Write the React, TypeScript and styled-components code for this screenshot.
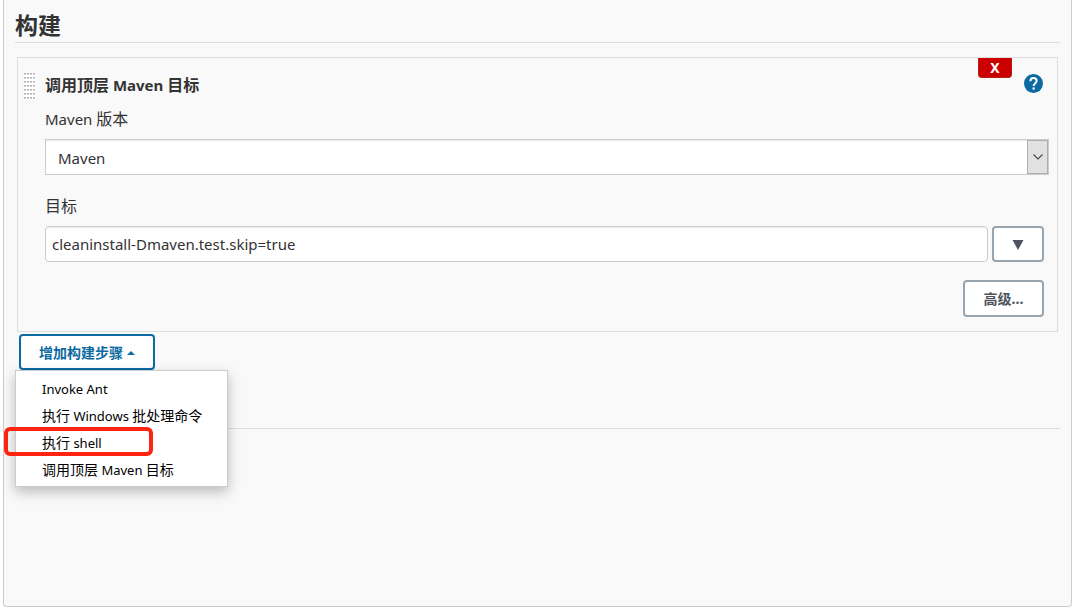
import React from "react";
import styled, { createGlobalStyle } from "styled-components";

const Global = createGlobalStyle`
  *, *::before, *::after { box-sizing: border-box; }
  body {
    margin: 0;
    background: #fff;
    color: #333;
    font: 16px/24px "Noto Sans", "Noto Sans CJK SC", sans-serif;
  }
  button, input, select { font: inherit; color: inherit; margin: 0; }
`;

const Panel = styled.main`
  min-height: 100vh;
  margin: 0 1px 0 3px;
  padding: 0 11px;
  background: #f9f9f9;
  border: 1px solid #ccc;
  border-top: 0;
  border-radius: 0 0 4px 4px;
`;

const SectionTitle = styled.h1`
  margin: 0;
  padding: 10px 0 2px;
  font-size: 23px;
  line-height: 30px;
  font-weight: 700;
  border-bottom: 1px solid #ddd;
`;

const StepCard = styled.section`
  margin: 14px 2px 0;
  padding: 0 8px 14px 6px;
  border: 1px solid #ddd;
`;

const StepHeader = styled.header`
  display: flex;
  align-items: flex-start;
`;

const Grip = styled.span`
  width: 12px;
  height: 26px;
  margin: 15px 9px 0 0;
  background-image:
    linear-gradient(90deg, transparent 2px, #fff 2px),
    linear-gradient(#b0b0b0 1px, #d4d4d4 1px, #d4d4d4 2px, #fff 2px);
  background-size: 3px 4px;
`;

const StepTitle = styled.h2`
  flex: 1;
  margin: 15px 0 0;
  font-size: 16px;
  line-height: 24px;
  font-weight: 700;
`;

const Latin = styled.span<{ $size: number }>`
  font-size: ${(p) => p.$size}px;
`;

const DeleteButton = styled.button`
  width: 34px;
  height: 20px;
  padding: 0;
  border: 1px solid #b3200f;
  border-top: 0;
  border-radius: 0 0 4px 4px;
  background: #c00;
  color: #fff;
  font-size: 14px;
  line-height: 20px;
  font-weight: 700;
`;

const HelpLink = styled.a`
  display: block;
  width: 19px;
  height: 19px;
  margin: 16px 6px 0 12px;
  svg { display: block; }
`;

const StepBody = styled.div`
  padding-left: 21px;
`;

const Field = styled.div<{ $gap: number }>`
  margin-top: ${(p) => p.$gap}px;
`;

const Label = styled.label`
  display: block;
  width: fit-content;
  height: 24px;
  margin-bottom: 8px;
`;

const SelectBox = styled.div`
  display: grid;
  > * { grid-area: 1 / 1; }
`;

const Select = styled.select`
  appearance: none;
  width: 100%;
  height: 36px;
  padding: 2px 30px 0 12px;
  border: 1px solid #ccc;
  border-radius: 0;
  background: #fff;
  box-shadow: inset 0 1px 1px rgba(0, 0, 0, 0.08);
  font-size: 15px;
`;

const SelectArrow = styled.span`
  justify-self: end;
  display: grid;
  place-items: center;
  width: 21px;
  height: 34px;
  margin: 1px;
  border: 1px solid #adadad;
  background: #e1e1e1;
  pointer-events: none;
`;

const InputRow = styled.div`
  display: flex;
  gap: 4px;
  margin-right: 5px;
`;

const TextInput = styled.input`
  flex: 1;
  min-width: 0;
  height: 36px;
  padding: 0 6px;
  border: 1px solid #ccc;
  border-radius: 4px;
  background: #fff;
  box-shadow: inset 0 1px 1px rgba(0, 0, 0, 0.08);
  font-size: 15px;
`;

const Button = styled.button<{ $primary?: boolean; $width: number; $height?: number }>`
  display: flex;
  align-items: center;
  justify-content: center;
  gap: 4px;
  width: ${(p) => p.$width}px;
  height: ${(p) => p.$height ?? 36}px;
  padding: 1px 0 0;
  border: 2px solid ${(p) => (p.$primary ? "#0b6aa2" : "#98a4ae")};
  border-radius: 4px;
  background: #fff;
  color: ${(p) => (p.$primary ? "#0b6aa2" : "#4d545d")};
  font-size: 14px;
  font-weight: 700;
`;

const Actions = styled.div`
  display: flex;
  justify-content: flex-end;
  margin: 18px 5px 0 0;
`;

const AddStep = styled.div`
  position: relative;
  width: fit-content;
  margin: 2px 0 0 4px;
`;

const Menu = styled.ul`
  position: absolute;
  top: 100%;
  left: -4px;
  width: 213px;
  margin: 0;
  padding: 4px 0 3px;
  list-style: none;
  background: #fff;
  border: 1px solid #ccc;
  box-shadow: 0 5px 12px rgba(0, 0, 0, 0.25);
`;

const MenuItem = styled.li`
  position: relative;
`;

const MenuLink = styled.a`
  display: block;
  height: 27px;
  padding-left: 26px;
  color: #000;
  font-size: 14px;
  line-height: 27px;
  text-decoration: none;
`;

const Highlight = styled.span`
  position: absolute;
  top: -2px;
  left: -12px;
  width: 149px;
  height: 29px;
  border: 4px solid #ff2412;
  border-radius: 6px;
  pointer-events: none;
`;

const Divider = styled.hr`
  height: 1px;
  margin: 58px 0 0;
  border: 0;
  background: #ddd;
`;

const steps = ["Invoke Ant", "执行 Windows 批处理命令", "执行 shell", "调用顶层 Maven 目标"];

// Latin words are set one size below the Chinese text around them.
function Mixed({ text, latin }: { text: string; latin: number }) {
  return (
    <>
      {text.split(/([A-Za-z ]+)/).filter(Boolean).map((part, i) =>
        /[A-Za-z]/.test(part) ? <Latin key={i} $size={latin}>{part}</Latin> : part
      )}
    </>
  );
}

export default function App() {
  return (
    <>
      <Global />
      <Panel>
        <SectionTitle>构建</SectionTitle>
        <StepCard>
          <StepHeader>
            <Grip />
            <StepTitle><Mixed text="调用顶层 Maven 目标" latin={15} /></StepTitle>
            <DeleteButton type="button">X</DeleteButton>
            <HelpLink href="#help" aria-label="Help">
              <svg width="19" height="19" viewBox="0 0 19 19">
                <circle cx="9.5" cy="9.5" r="9.5" fill="#0b6aa2" />
                <path d="M6.4 7.2C6.4 5 7.6 3.9 9.5 3.9s3.2 1.1 3.2 2.9c0 2.3-3.1 2.5-3.1 5.3" fill="none" stroke="#fff" strokeWidth="2" />
                <rect x="8.5" y="13.4" width="2.2" height="2.2" fill="#fff" />
              </svg>
            </HelpLink>
          </StepHeader>
          <StepBody>
            <Field $gap={8}>
              <Label htmlFor="version"><Mixed text="Maven 版本" latin={15} /></Label>
              <SelectBox>
                <Select id="version" defaultValue="Maven">
                  <option>Maven</option>
                </Select>
                <SelectArrow>
                  <svg width="10" height="6" viewBox="0 0 10 6">
                    <path d="M.5.5 5 5 9.5.5" fill="none" stroke="#444" strokeWidth="1.1" />
                  </svg>
                </SelectArrow>
              </SelectBox>
            </Field>
            <Field $gap={19}>
              <Label htmlFor="targets">目标</Label>
              <InputRow>
                <TextInput id="targets" defaultValue="cleaninstall-Dmaven.test.skip=true" />
                <Button type="button" $width={52} aria-label="Expand">
                  <svg width="12" height="10" viewBox="0 0 12 10">
                    <path d="M.5 0h11L6 10z" fill="#4d545d" />
                  </svg>
                </Button>
              </InputRow>
            </Field>
            <Actions>
              <Button type="button" $width={81} $height={37}>高级...</Button>
            </Actions>
          </StepBody>
        </StepCard>
        <AddStep>
          <Button type="button" $primary $width={136}>
            增加构建步骤
            <svg width="8" height="4" viewBox="0 0 8 4">
              <path d="M0 4 4 0l4 4z" fill="#0b6aa2" />
            </svg>
          </Button>
          <Menu>
            {steps.map((step) => (
              <MenuItem key={step}>
                <MenuLink href="#add"><Mixed text={step} latin={13} /></MenuLink>
                {step === "执行 shell" && <Highlight />}
              </MenuItem>
            ))}
          </Menu>
        </AddStep>
        <Divider />
      </Panel>
    </>
  );
}
